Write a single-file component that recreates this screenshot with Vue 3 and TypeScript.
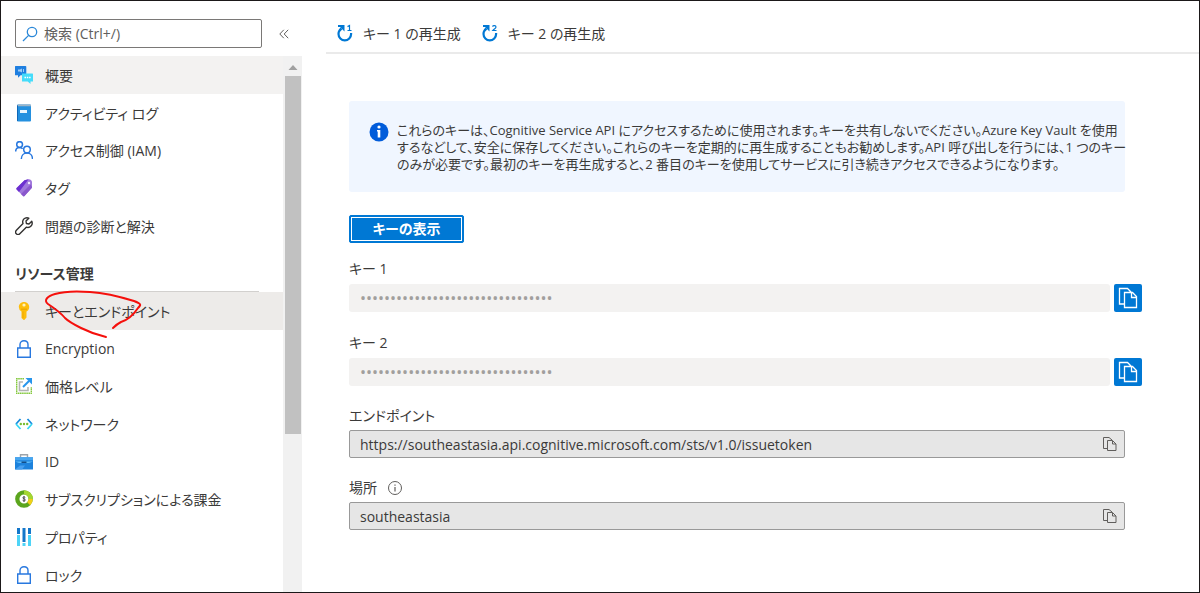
<script setup lang="ts">
import { ref } from 'vue'

interface MenuItem {
  icon: string
  label: string
  state?: 'hover' | 'selected'
}

const search = ref('')

const generalItems: MenuItem[] = [
  { icon: 'overview', label: '概要', state: 'hover' },
  { icon: 'log', label: 'アクティビティ ログ' },
  { icon: 'people', label: 'アクセス制御 (IAM)' },
  { icon: 'tag', label: 'タグ' },
  { icon: 'wrench', label: '問題の診断と解決' },
]

const resourceItems: MenuItem[] = [
  { icon: 'key', label: 'キーとエンドポイント', state: 'selected' },
  { icon: 'lock', label: 'Encryption' },
  { icon: 'pricing', label: '価格レベル' },
  { icon: 'network', label: 'ネットワーク' },
  { icon: 'identity', label: 'ID' },
  { icon: 'billing', label: 'サブスクリプションによる課金' },
  { icon: 'properties', label: 'プロパティ' },
  { icon: 'lock', label: 'ロック' },
]

const groups = [
  { title: '', items: generalItems },
  { title: 'リソース管理', items: resourceItems },
]

const notice = [
  'これらのキーは、Cognitive Service API にアクセスするために使用されます。キーを共有しないでください。Azure Key Vault を使用',
  'するなどして、安全に保存してください。これらのキーを定期的に再生成することもお勧めします。API 呼び出しを行うには、1 つのキー',
  'のみが必要です。最初のキーを再生成すると、2 番目のキーを使用してサービスに引き続きアクセスできるようになります。',
]

const masked = '•'.repeat(32)
const keys = [1, 2]
const endpoint = 'https://southeastasia.api.cognitive.microsoft.com/sts/v1.0/issuetoken'
const location = 'southeastasia'
</script>

<template>
  <div class="page">
    <aside class="sidebar">
      <div class="search-row">
        <label class="search">
          <svg width="16" height="16" viewBox="0 0 16 16" fill="none" stroke="#2b88d8" stroke-width="1.3">
            <circle cx="10" cy="6" r="4.7" />
            <path d="M6.6 9.4 1 15" />
          </svg>
          <input v-model="search" type="text" placeholder="検索 (Ctrl+/)" aria-label="検索" />
        </label>
        <button class="collapse" type="button" aria-label="メニューを折りたたむ">
          <svg width="10" height="10" viewBox="0 0 10 10" fill="none" stroke="#605e5c">
            <path d="M4.8.8.8 5l4 4.2M9.2.8 5.2 5l4 4.2" />
          </svg>
        </button>
      </div>

      <div class="menu-area">
        <nav class="menu">
          <section v-for="group in groups" :key="group.title">
            <h2 v-if="group.title">{{ group.title }}</h2>
            <ul>
              <li v-for="item in group.items" :key="item.label">
                <a href="#" :class="item.state">
                  <svg class="icon" width="18" height="18" viewBox="0 0 18 18" fill="none">
                    <g v-if="item.icon === 'overview'">
                      <path d="M.5 0h10a.8.8 0 0 1 .8.8v8.4H5.6L3 11.8V9.200H.5a.5.5 0 0 1-.5-.5V.5A.5.5 0 0 1 .5 0Z" fill="#1f7fe0" />
                      <path d="M3 3.500h2l2-1v4L5 5.500H3Z" fill="#9cccf7" />
                      <path d="M8.500 3v3" stroke="#9cccf7" />
                      <path d="M7 7.500h10.500a.5.5 0 0 1 .5.5v7.500h-2.500V18l-2.800-2.500H7Z" fill="#45dcfa" />
                      <path d="M9.500 11.500H11m.8 0h1.500m.8 0h1.500" stroke="#fff" stroke-width="1.400" />
                    </g>
                    <g v-else-if="item.icon === 'log'">
                      <path d="M3 .5h12a1 1 0 0 1 1 1v15a1 1 0 0 1-1 1H3.500A1.500 1.500 0 0 1 2 16V1.500a1 1 0 0 1 1-1Z" fill="#2490df" />
                      <path d="M3.500.5H15a1 1 0 0 1 1 1v.7H3a.8.8 0 0 1 .5-1.700Z" fill="#9db4c6" />
                      <path d="M2 1.500v14.700a1 1 0 0 0 1 1.100V1.500Z" fill="#0f67b8" />
                      <path d="M5 6h7v3H5z" fill="#e8f5ff" />
                    </g>
                    <g v-else-if="item.icon === 'people'" stroke="#2878df" stroke-width="1.500">
                      <circle cx="4.600" cy="3.600" r="2.900" />
                      <circle cx="12" cy="8.600" r="3.300" />
                      <path d="M.7 10.500c0-2.500 1.600-4 3.800-4 1.400 0 2.400.5 3.100 1.400M6.300 18c0-3.600 2.500-6 5.700-6s5.500 2.400 5.500 6" />
                    </g>
                    <g v-else-if="item.icon === 'tag'">
                      <path d="m9.500 1.200 4-.9c1.500-.3 3.500 1.200 3.500 2.700v5c0 .5-.2 1-.5 1.300L9.500 17a1 1 0 0 1-1.500 0L1.600 10.500a1 1 0 0 1 0-1.400Z" fill="#a078dc" />
                      <path d="m9.500 1.200 4-.9L4 13 1.600 10.500a1 1 0 0 1 0-1.400Z" fill="#6c2fd0" />
                      <path d="m6 15 9.500-9.500L17 8c0 .5-.2 1-.5 1.300L9.500 17a1 1 0 0 1-1.500 0Z" fill="#8a58cc" />
                      <circle cx="14" cy="4" r="1.200" fill="#f3eafd" />
                    </g>
                    <path v-else-if="item.icon === 'wrench'" d="M16.800 4.200 14 7l-2.600-.5L11 4 13.800 1.200C11.500.2 8.500 1.200 7.800 3.800c-.3 1 0 2 .2 2.800l-6.600 6.700c-2.400 2.500 1 5.800 3.400 3.400l6.500-6.500c3.800 1.200 7-2.200 5.500-6Z" stroke="#323130" stroke-width="1.400" stroke-linejoin="round" />
                    <g v-else-if="item.icon === 'key'">
                      <path d="M9 0c3 0 5.200 2.200 5.200 5 0 2-1 3.600-2.700 4.400v6.100L9.300 18H8.700l-2.200-2V9.400A5 5 0 0 1 3.800 5C3.800 2.200 6 0 9 0Z" fill="#fdbd0c" />
                      <circle cx="9" cy="3" r="1.600" fill="#fff2bc" />
                      <path d="M6 7.200h6" stroke="#e8a000" />
                      <path d="M8 9.500v6.500" stroke="#f0a800" />
                    </g>
                    <g v-else-if="item.icon === 'lock'" stroke="#2878df" stroke-width="1.400">
                      <path d="M2.700 8h12.600v9.300H2.700zM5 8V4.500C5 2 6.800.7 9 .7S13 2 13 4.500V8" />
                    </g>
                    <g v-else-if="item.icon === 'pricing'">
                      <path d="M9 1.700H1.700v14.600h14.600V10" stroke="#84c83e" stroke-width="1.400" stroke-dasharray="1.600 .5" />
                      <path d="M8 5H4.500v8.500H13V10" stroke="#b4b4b4" stroke-width="1.600" />
                      <path d="m8 10 6-6" stroke="#2795ec" stroke-width="2" />
                      <path d="M10.500 1H17v6.500Z" fill="#2795ec" />
                    </g>
                    <g v-else-if="item.icon === 'network'">
                      <path d="M5.500 4 1 9" stroke="#168bdc" stroke-width="1.800" />
                      <path d="m1 9 4.500 5" stroke="#35d6f5" stroke-width="1.800" />
                      <path d="M12.500 4 17 9" stroke="#168bdc" stroke-width="1.800" />
                      <path d="m17 9-4.500 5" stroke="#35d6f5" stroke-width="1.800" />
                      <g fill="#78bd31">
                        <circle cx="5.800" cy="9" r="1.200" />
                        <circle cx="9" cy="9" r="1.200" />
                        <circle cx="12.200" cy="9" r="1.200" />
                      </g>
                    </g>
                    <g v-else-if="item.icon === 'identity'">
                      <path d="M5.500 4.500V1.700h7v2.800" stroke="#9da4aa" stroke-width="1.400" />
                      <path d="M0 4.300h18v12.200H0z" fill="#1d82dc" />
                      <path d="M0 4.300h18v3H0z" fill="#48a6ef" />
                      <path d="M0 8.500h18L14 10H4Z" fill="#5fbcf8" />
                      <path d="m0 16.500 5-4h5l-3 4Z" fill="#479ff0" />
                      <path d="M6.500 8.500h5V10h-5z" fill="#124d88" />
                    </g>
                    <g v-else-if="item.icon === 'billing'">
                      <circle cx="9" cy="9" r="6.700" stroke="#5ba51d" stroke-width="4.300" />
                      <path d="M9 2.300A6.700 6.700 0 0 1 15.700 9" stroke="#a5d631" stroke-width="4.300" />
                      <path d="M15.700 9a6.700 6.700 0 0 1-2 4.700" stroke="#f2cf18" stroke-width="4.300" />
                      <path d="M10.300 7.500c-.8-.8-2.500-.7-2.500.3 0 1.200 2.600.9 2.600 2.200 0 1-1.900 1.200-2.800.3M9 6v6" stroke="#333" stroke-width=".8" />
                    </g>
                    <g v-else-if="item.icon === 'properties'" stroke-width="3">
                      <path d="M3.500 0v6M9 0v14M14.500 0v6" stroke="#1477ca" />
                      <path d="M3.500 7v11M9 15v3M14.500 7v11" stroke="#4ed4f7" />
                    </g>
                  </svg>
                  <span>{{ item.label }}</span>
                  <svg v-if="item.state === 'selected'" class="scribble" width="104" height="52" viewBox="0 0 104 52" fill="none" stroke="#f5100c" stroke-width="2" stroke-linecap="round" stroke-linejoin="round">
                    <path d="M65 48c-9-2-17-5-25-9-6-3-12-6-16-10-4-5-11-10-17-14-5-4 0-8 7-10 10-3 22-3 35-2 16 1 31 5 44 9 8 3 7 4 4 7-4 6-10 12-17 14-4 2-6 4-8 6" />
                  </svg>
                </a>
              </li>
            </ul>
          </section>
        </nav>
        <div class="scrollbar" aria-hidden="true">
          <svg width="10" height="5" viewBox="0 0 10 5"><path d="M5 0 9.500 5h-9Z" fill="#a0a0a0" /></svg>
          <div class="thumb"></div>
        </div>
      </div>
    </aside>

    <main>
      <div class="toolbar">
        <button v-for="n in keys" :key="n" type="button">
          <svg width="18" height="18" viewBox="0 0 18 18" fill="none">
            <path d="M5.500 4.500C3.500 6 2.500 7.500 2.500 10a6.300 6.300 0 0 0 12.600 0V9" stroke="#0078d4" stroke-width="2.200" />
            <path d="M2 1h6.500v6.500L6.500 5.500 4 3H2Z" fill="#0078d4" />
            <path v-if="n === 1" d="M11.500 2.600 13.500 1.500V6.500M11.500 6.500h4" stroke="#0078d4" stroke-width="1.200" />
            <path v-else d="M11.500 2.600c.5-1.500 3.500-1.400 3.500.4 0 1.400-2.200 2-3.300 3.500h3.800" stroke="#0078d4" stroke-width="1.200" />
          </svg>
          <span>キー {{ n }} の再生成</span>
        </button>
      </div>

      <div class="content">
        <div class="notice inset">
          <svg width="20" height="20" viewBox="0 0 20 20">
            <circle cx="10" cy="10" r="9.500" fill="#015cda" />
            <circle cx="10" cy="5" r="1.600" fill="#fff" />
            <path d="M8 8h3.300v7.500H8.700V9.500H8Z" fill="#fff" />
          </svg>
          <p><span v-for="line in notice" :key="line">{{ line }}</span></p>
        </div>

        <button class="show-keys" type="button">キーの表示</button>

        <div v-for="n in keys" :key="n" class="key-field">
          <label :for="'key' + n">キー {{ n }}</label>
          <div class="key-row">
            <input :id="'key' + n" class="masked" type="text" :value="masked" readonly />
            <button class="copy-key" type="button" aria-label="コピー">
              <svg width="20" height="22" viewBox="0 0 20 22" fill="none" stroke="#fff" stroke-width="1.300">
                <path d="M6.500 17H1.500V1.500h8L13 5M6.500 5.500h8l4 4v11h-12zM13.500 5.500v5h5" />
              </svg>
            </button>
          </div>
        </div>

        <div class="value-field inset">
          <label for="endpoint">エンドポイント</label>
          <div class="value-box">
            <input id="endpoint" type="text" :value="endpoint" readonly />
            <button type="button" aria-label="コピー">
              <svg width="14" height="16" viewBox="0 0 14 16" fill="none" stroke="#605e5c">
                <path d="M4.500 12.500h-4v-11h5.500l3 2.500M4.500 4.500h5l3.500 3.500v6.500H4.500zM9.500 4.500V8H13" />
              </svg>
            </button>
          </div>
        </div>

        <div class="value-field inset">
          <label for="location">
            場所
            <svg width="16" height="16" viewBox="0 0 16 16" fill="none" stroke="#605e5c">
              <circle cx="8" cy="8" r="6.500" />
              <path d="M8 7v4.500M8 4.500v1.300" stroke-width="1.200" />
            </svg>
          </label>
          <div class="value-box">
            <input id="location" type="text" :value="location" readonly />
            <button type="button" aria-label="コピー">
              <svg width="14" height="16" viewBox="0 0 14 16" fill="none" stroke="#605e5c">
                <path d="M4.500 12.500h-4v-11h5.500l3 2.500M4.500 4.500h5l3.500 3.500v6.500H4.500zM9.500 4.500V8H13" />
              </svg>
            </button>
          </div>
        </div>
      </div>
    </main>
  </div>
</template>

<style>
body {
  margin: 0;
}
</style>

<style scoped>
* {
  box-sizing: border-box;
}
.page {
  display: flex;
  height: 100vh;
  border: 1px solid #1b1819;
  background: #fff;
  color: #3b3a39;
  font-family: 'Open Sans', 'Noto Sans CJK JP', sans-serif;
  font-size: 14px;
  font-feature-settings: 'palt', 'kern';
  overflow: hidden;
}
button,
input {
  padding: 0;
  border: 0;
  background: none;
  color: inherit;
  font: inherit;
  font-feature-settings: inherit;
}
input {
  min-width: 0;
  flex: 1;
  outline: none;
}
svg {
  flex: none;
}
.sidebar {
  display: flex;
  flex: none;
  flex-direction: column;
  width: 301px;
}
.search-row {
  display: flex;
  align-items: center;
  gap: 17px;
  padding: 18px 13px 8px 14px;
}
.search {
  display: flex;
  flex: 1;
  align-items: center;
  gap: 6px;
  height: 29px;
  padding: 0 6px;
  border: 1px solid #7a7876;
  border-radius: 2px;
}
.search input::placeholder {
  color: #605e5c;
  opacity: 1;
}
.collapse {
  display: flex;
}
.menu-area {
  display: flex;
  flex: 1;
  min-height: 0;
}
.menu {
  flex: 1;
  overflow: hidden;
}
.menu h2 {
  margin: 11px 24px 0 14px;
  border-bottom: 1px solid #d2d0ce;
  font-size: 14px;
  font-weight: 600;
  line-height: 35px;
}
ul {
  display: grid;
  grid-auto-rows: 38px 38px 37px;
  margin: 0;
  padding: 0;
  list-style: none;
}
li {
  display: flex;
}
a {
  position: relative;
  display: flex;
  flex: 1;
  align-items: center;
  gap: 12px;
  padding: 0 0 1px 14px;
  color: inherit;
  text-decoration: none;
  white-space: nowrap;
}
.hover {
  background: #f3f2f1;
}
.selected {
  background: #edebe9;
}
.scribble {
  position: absolute;
  top: -3px;
  left: 40px;
}
.scrollbar {
  display: flex;
  flex-direction: column;
  align-items: center;
  gap: 6px;
  width: 19px;
  padding-top: 9px;
  background: #f1f1f1;
}
.thumb {
  width: 16px;
  height: 68%;
  background: #c1c1c1;
}
main {
  flex: 1;
  min-width: 0;
  padding-left: 24px;
}
.toolbar {
  display: flex;
  gap: 20px;
  height: 53px;
  padding: 12px 10px 0;
  border-bottom: 2px solid #eaeaea;
}
.toolbar button {
  display: flex;
  align-items: center;
  gap: 9px;
}
.content {
  padding: 47px 57px 0 23px;
}
.inset {
  margin-right: 17px;
}
.notice {
  display: flex;
  gap: 8px;
  padding: 21px 20px 19px;
  border-radius: 3px;
  background: #f0f6ff;
  font-size: 13px;
}
.notice p {
  margin: 0;
  line-height: 17px;
  white-space: nowrap;
}
.notice span {
  display: block;
}
.show-keys {
  display: block;
  width: 115px;
  height: 28px;
  margin: 23px 0 15px;
  padding-bottom: 2px;
  border: 1px solid #0078d4;
  border-radius: 2px;
  outline: 1px solid #fff;
  outline-offset: -3px;
  background: #0078d4;
  color: #fff;
  font-weight: 600;
}
label {
  display: flex;
  align-items: center;
  gap: 10px;
  line-height: 22px;
}
.key-field {
  margin-bottom: 20px;
}
.key-field label {
  padding-bottom: 4px;
}
.key-row {
  display: flex;
  gap: 4px;
}
.masked {
  height: 28px;
  padding: 0 11px;
  border-radius: 3px;
  background: #f3f2f1;
  color: #a19f9d;
  font-size: 16px;
}
.copy-key {
  display: flex;
  align-items: center;
  justify-content: center;
  width: 28px;
  height: 28px;
  border-radius: 2px;
  background: #0078d4;
}
.value-field {
  margin-bottom: 20px;
}
.value-field label {
  padding-bottom: 4px;
  line-height: 20px;
}
.value-box {
  display: flex;
  align-items: center;
  height: 28px;
  padding: 0 7px 0 10px;
  border: 1px solid #999;
  border-radius: 2px;
  background: #e6e6e6;
}
.value-box button {
  display: flex;
}
</style>
